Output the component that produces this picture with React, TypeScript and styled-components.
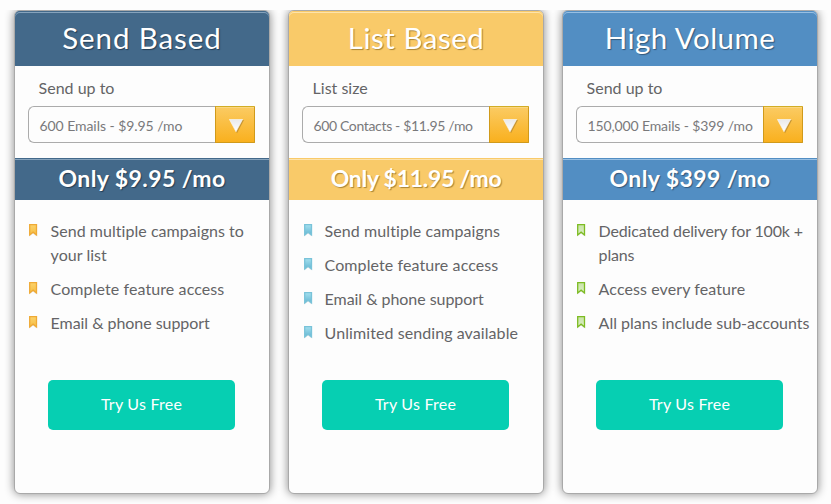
import React from 'react';
import styled, { createGlobalStyle } from 'styled-components';

const GlobalStyle = createGlobalStyle`
  * { box-sizing: border-box; }
  html, body { margin: 0; background: #fdfdfd; }
  body { font-family: Lato, "Liberation Sans", sans-serif; color: #646466; }
`;

type Theme = { base: string; edge: string; shade: string };

const themes: Record<string, Theme> = {
  navy: { base: '#43698a', edge: '#86a3bc', shade: '#243e56' },
  amber: { base: '#f9ca69', edge: '#fde3ab', shade: '#a98436' },
  azure: { base: '#528ec3', edge: '#97bfe3', shade: '#33597c' },
};

const Page = styled.main`
  padding-top: 10px;
  height: 504px;
  overflow: hidden;
`;

const Plans = styled.div`
  display: flex;
  gap: 18px;
  height: 494px;
  padding-left: 14px;
  overflow: hidden;
`;

const Card = styled.section`
  display: flex;
  flex-direction: column;
  flex: 0 0 256px;
  height: 484px;
  border: 1px solid #a9a9a9;
  border-radius: 6px;
  background: #fdfdfd;
  box-shadow: 0 0 10px #888;
`;

const Band = styled.div<{ $theme: Theme }>`
  display: flex;
  justify-content: center;
  background: ${(p) => p.$theme.base};
  box-shadow: inset 0 1px ${(p) => p.$theme.base}, inset 0 2px ${(p) => p.$theme.edge};
  color: #fff;
  text-shadow: 1px 1px 1px ${(p) => p.$theme.shade};
  white-space: nowrap;
`;

const Header = styled(Band)`
  height: 55px;
  border-radius: 5px 5px 0 0;
`;

const Title = styled.h2<{ $track: number }>`
  margin: 0;
  font-size: 29.5px;
  font-weight: 400;
  line-height: 53px;
  letter-spacing: ${(p) => p.$track}px;
`;

const PriceBand = styled(Band)`
  height: 42px;
`;

const Price = styled.strong<{ $track: number }>`
  font-size: 23px;
  font-weight: 700;
  line-height: 40px;
  letter-spacing: ${(p) => p.$track}px;
`;

const Form = styled.div`
  height: 92px;
  padding: 12px 14px 0 13px;
`;

const Label = styled.div`
  padding-left: 10.6px;
  font-size: 16px;
  line-height: 20px;
`;

const Select = styled.div`
  display: flex;
  width: 227px;
  height: 37px;
  margin-top: 8px;
`;

const Value = styled.div<{ $track: number }>`
  flex: 1;
  padding-left: 10.4px;
  border: 1px solid #ababab;
  border-right: 0;
  border-radius: 6px 0 0 6px;
  color: #79797b;
  font-size: 14px;
  line-height: 38px;
  letter-spacing: ${(p) => p.$track}px;
  white-space: nowrap;
`;

const Toggle = styled.button`
  display: flex;
  width: 40px;
  padding: 12px 0 0 13px;
  border: 1px solid #d09a1b;
  border-top-color: #d2ad26;
  border-radius: 0 1px 1px 0;
  background: linear-gradient(#fbcb63, #f9b01e);
  box-shadow: inset 0 1px #fbd77f;
`;

const Features = styled.ul`
  height: 180px;
  margin: 0;
  padding: 19px 0 0;
  list-style: none;
`;

const Feature = styled.li<{ $indent: number }>`
  display: grid;
  grid-template-columns: ${(p) => 35.6 - p.$indent}px 1fr;
  margin-bottom: 10px;
  padding-left: ${(p) => p.$indent}px;
  font-size: 16px;
  line-height: 24px;
`;

const FlagSlot = styled.span`
  padding-top: 5px;
  line-height: 0;
`;

const FeatureText = styled.span<{ $track: number }>`
  letter-spacing: ${(p) => p.$track}px;
`;

const TryButton = styled.button`
  width: 187px;
  height: 50px;
  margin: 0 0 0 33px;
  padding: 0 0 2px;
  border: 0;
  border-radius: 5px;
  background: #06cfb2;
  color: #fff;
  font: 400 16px/48px Lato, "Liberation Sans", sans-serif;
  letter-spacing: 0.23px;
`;

type FlagColor = { top: string; bottom: string; stroke: string };

const flags: Record<string, FlagColor> = {
  gold: { top: '#fbd36c', bottom: '#f7bd42', stroke: '#efaa35' },
  sky: { top: '#a5e0ef', bottom: '#63b6d2', stroke: '#79c3d9' },
  lime: { top: '#c9e3a8', bottom: '#dcefc6', stroke: '#7dbc22' },
};

const Flag = ({ name }: { name: string }) => {
  const c = flags[name];
  return (
    <svg width="9" height="14" viewBox="0 0 9 14">
      <defs>
        <linearGradient id={`flag-${name}`} x1="0" y1="0" x2="0" y2="1">
          <stop offset="0" stopColor={c.top} />
          <stop offset="1" stopColor={c.bottom} />
        </linearGradient>
      </defs>
      <path d="M.5 12.5V3h7v9.5L4 9.5z" fill="#000" opacity=".1" />
      <path d="M.7.7h6.8v10.2L4.1 8.2.7 10.9z" fill={`url(#flag-${name})`} stroke={c.stroke} strokeWidth="1.3" />
    </svg>
  );
};

const Arrow = () => (
  <svg width="17" height="15" viewBox="0 0 17 15">
    <defs>
      <linearGradient id="arrow" x1="0" y1="0" x2="0" y2="1">
        <stop offset="0" stopColor="#e9e9ea" />
        <stop offset="1" stopColor="#fff" />
      </linearGradient>
    </defs>
    <path d="M1.5 1H15L8 14.2z" fill="#a37a2c" opacity=".6" />
    <path d="M.3.3h13.4L7 12.8z" fill="url(#arrow)" stroke="#fff" strokeWidth=".5" />
  </svg>
);

type Tracked = [text: string, track: number];

interface Plan {
  theme: Theme;
  flag: string;
  indent: number;
  title: Tracked;
  label: string;
  value: Tracked;
  price: Tracked;
  features: Tracked[];
}

const plans: Plan[] = [
  {
    theme: themes.navy,
    flag: 'gold',
    indent: 14,
    title: ['Send Based', 0.9],
    label: 'Send up to',
    value: ['600 Emails - $9.95 /mo', -0.05],
    price: ['Only $9.95 /mo', 0.42],
    features: [
      ['Send multiple campaigns to your list', 0.04],
      ['Complete feature access', 0.09],
      ['Email & phone support', -0.05],
    ],
  },
  {
    theme: themes.amber,
    flag: 'sky',
    indent: 15,
    title: ['List Based', 0.5],
    label: 'List size',
    value: ['600 Contacts - $11.95 /mo', -0.34],
    price: ['Only $11.95 /mo', -0.25],
    features: [
      ['Send multiple campaigns', 0.08],
      ['Complete feature access', 0.09],
      ['Email & phone support', -0.05],
      ['Unlimited sending available', 0.08],
    ],
  },
  {
    theme: themes.azure,
    flag: 'lime',
    indent: 14,
    title: ['High Volume', 0.48],
    label: 'Send up to',
    value: ['150,000 Emails - $399 /mo', -0.12],
    price: ['Only $399 /mo', 0.4],
    features: [
      ['Dedicated delivery for 100k + plans', -0.15],
      ['Access every feature', 0.09],
      ['All plans include sub-accounts', 0],
    ],
  },
];

const PlanCard = ({ plan }: { plan: Plan }) => (
  <Card>
    <Header $theme={plan.theme}>
      <Title $track={plan.title[1]}>{plan.title[0]}</Title>
    </Header>
    <Form>
      <Label>{plan.label}</Label>
      <Select>
        <Value $track={plan.value[1]}>{plan.value[0]}</Value>
        <Toggle aria-label={plan.label}>
          <Arrow />
        </Toggle>
      </Select>
    </Form>
    <PriceBand $theme={plan.theme}>
      <Price $track={plan.price[1]}>{plan.price[0]}</Price>
    </PriceBand>
    <Features>
      {plan.features.map(([text, track]) => (
        <Feature key={text} $indent={plan.indent}>
          <FlagSlot>
            <Flag name={plan.flag} />
          </FlagSlot>
          <FeatureText $track={track}>{text}</FeatureText>
        </Feature>
      ))}
    </Features>
    <TryButton>Try Us Free</TryButton>
  </Card>
);

export default function App() {
  return (
    <Page>
      <GlobalStyle />
      <Plans>
        {plans.map((plan) => (
          <PlanCard key={plan.title[0]} plan={plan} />
        ))}
      </Plans>
    </Page>
  );
}
